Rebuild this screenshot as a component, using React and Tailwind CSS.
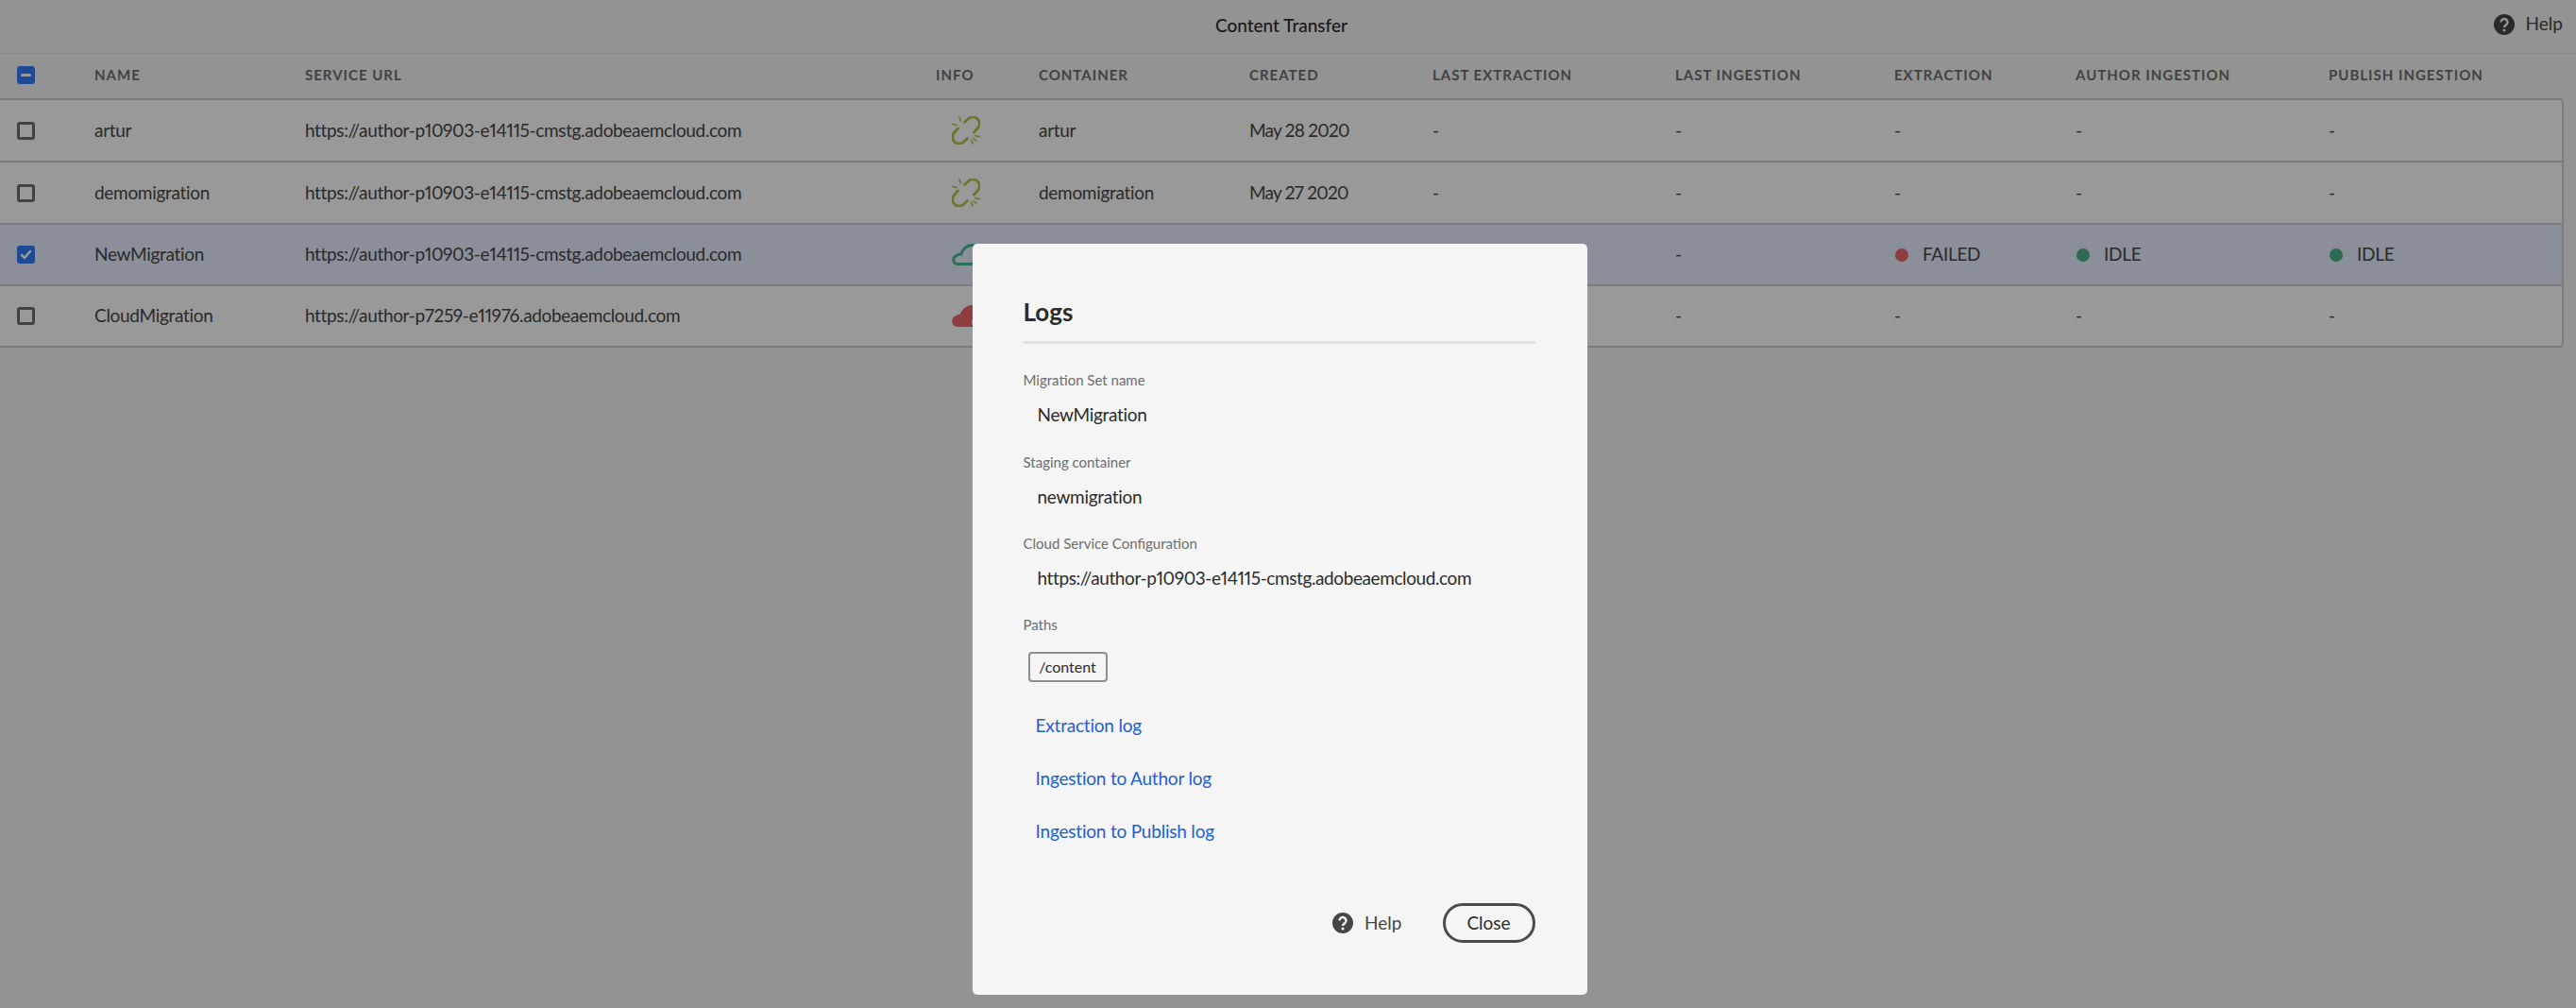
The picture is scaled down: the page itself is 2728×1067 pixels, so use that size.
const COLS = 'grid grid-cols-[100px_223px_668px_109px_223px_194px_257px_232px_192px_268px_1fr] items-center';

const URL_A = 'https://author-p10903-e14115-cmstg.adobeaemcloud.com';

const ROWS = [
  { name: 'artur', url: URL_A, info: 'link', container: 'artur', created: 'May 28 2020', h: 'h-[64px]' },
  { name: 'demomigration', url: URL_A, info: 'link', container: 'demomigration', created: 'May 27 2020', h: 'h-[66px]' },
  { name: 'NewMigration', url: URL_A, info: 'cloud', selected: true, h: 'h-[65px]' },
  { name: 'CloudMigration', url: 'https://author-p7259-e11976.adobeaemcloud.com', info: 'cloudFail', h: 'h-[65px]' },
];

function BrokenLink() {
  return (
    <svg width="30" height="30" viewBox="0 0 30 30" fill="none" stroke="#c2c04e" strokeWidth="2.800" strokeLinecap="round">
      <path d="M13.500 6.500 17 3.200A7 7 0 0 1 27.500 12.500L23.500 17" />
      <path d="M16.500 23.500 13 26.800A7 7 0 0 1 2.500 17.500L6.500 13" />
      <path d="M8 1l1.400 4M1 8.400l4 1M29 21.600l-4-1M22 29l-1.400-4M23 23.500l2.800 2.800" strokeWidth="1.600" />
    </svg>
  );
}

function Cloud({ failed }) {
  return (
    <svg width="40" height="24" viewBox="0 0 40 24" fill={failed ? '#ee6669' : 'none'} stroke={failed ? '#ee6669' : '#4bbb8f'} strokeWidth="3">
      <path d="M6 21.500a4.500 4.500 0 0 1-1-8.800C6 11.500 8 11 10 11c1-5 6-9.500 11-9.500 6 0 10 4 11 9.500 4 0 6.500 2.500 6.500 5.500S36 21.500 32 21.500Z" />
      {failed && <circle cx="25" cy="18" r="5" fill="#ffffff" stroke="#ee6669" strokeWidth="2" />}
    </svg>
  );
}

function HelpIcon() {
  return (
    <svg width="22" height="22" viewBox="0 0 22 22">
      <circle cx="11" cy="11" r="11" fill="#464646" />
      <path d="M7.500 8.500a3.500 3.500 0 1 1 5.600 2.800c-1.300 1-2.100 1.500-2.100 2.700" fill="none" stroke="#f5f5f5" strokeWidth="2.400" />
      <circle cx="11" cy="17" r="1.500" fill="#f5f5f5" />
    </svg>
  );
}

function Checkbox({ state }) {
  if (state === 'none') {
    return <span className="block w-[19px] h-[19px] rounded-[3px] border-[3px] border-[#6e6e6e] bg-transparent" />;
  }
  return (
    <span className="flex items-center justify-center w-[19px] h-[19px] rounded-[3px] bg-[#327cf8]">
      {state === 'checked' ? (
        <svg width="13" height="13" viewBox="0 0 13 13" fill="none" stroke="#ffffff" strokeWidth="2.500" strokeLinecap="round" strokeLinejoin="round">
          <path d="M2 7l3 3 6-7" />
        </svg>
      ) : (
        <span className="block w-[11px] h-[3px] rounded-sm bg-white" />
      )}
    </span>
  );
}

function Status({ color, label }) {
  return (
    <div className="flex items-center gap-[15px] pl-[1px]">
      <span className={`w-[14px] h-[14px] rounded-full ${color}`} />
      <span>{label}</span>
    </div>
  );
}

function Field({ label, value, className, valueClass = 'tracking-[-0.3px]' }) {
  return (
    <div className={className}>
      <div className="text-[15px] leading-[20px] text-[#6e6e6e]">{label}</div>
      <div className={`mt-[15px] pl-[15px] text-[19px] leading-[24px] text-[#2c2c2c] ${valueClass}`}>{value}</div>
    </div>
  );
}

export default function App() {
  return (
    <div className="relative h-screen w-full overflow-hidden bg-[#f5f5f5] text-[19px] text-[#464646] proportional-nums font-['Lato','Open_Sans',sans-serif]">

      {/* Top bar */}
      <div className="grid grid-cols-[1fr_auto_1fr] items-center h-[57px] pr-[14px] border-b border-[#e8e8e8]">
        <div />
        <div className="text-[19px] font-medium text-[#2c2c2c] pb-[2px]">Content Transfer</div>
        <div className="flex items-center justify-end gap-[12px] pb-[5px]">
          <HelpIcon />
          <span className="text-[19px]">Help</span>
        </div>
      </div>

      {/* Table header */}
      <div className={`${COLS} h-[47px] pr-[14px] pb-[2px]`}>
        <div className="pl-[18px]"><Checkbox state="indeterminate" /></div>
        {['NAME', 'SERVICE URL', 'INFO', 'CONTAINER', 'CREATED', 'LAST EXTRACTION', 'LAST INGESTION', 'EXTRACTION', 'AUTHOR INGESTION', 'PUBLISH INGESTION'].map(h => (
          <div key={h} className="text-[15px] font-bold tracking-[1px] text-[#6e6e6e] whitespace-nowrap">{h}</div>
        ))}
      </div>

      {/* Rows */}
      <div className="mr-[13px] bg-white border-t-2 border-b-2 border-r-2 border-[#cfcfcf] rounded-r-[4px] overflow-hidden tracking-[-0.3px]">
        {ROWS.map((r, i) => (
          <div key={r.name} className={`${COLS} ${r.h} ${i > 0 ? 'border-t-2 border-[#cfcfcf]' : ''} ${r.selected ? 'bg-[#e6eeff]' : ''}`}>
            <div className="pl-[18px]"><Checkbox state={r.selected ? 'checked' : 'none'} /></div>
            <div>{r.name}</div>
            <div className="tracking-[-0.35px]">{r.url}</div>
            <div className="pl-[17px] flex items-center">
              {r.info === 'link' ? <BrokenLink /> : <Cloud failed={r.info === 'cloudFail'} />}
            </div>
            <div>{r.container}</div>
            <div className="tracking-[-0.75px]">{r.created}</div>
            <div>{r.container ? '-' : ''}</div>
            <div>-</div>
            {r.selected ? <Status color="bg-[#ee6669]" label="FAILED" /> : <div>-</div>}
            {r.selected ? <Status color="bg-[#4bb28a]" label="IDLE" /> : <div>-</div>}
            {r.selected ? <Status color="bg-[#4bb28a]" label="IDLE" /> : <div>-</div>}
          </div>
        ))}
      </div>

      {/* Dialog */}
      <div className="fixed inset-0 bg-black/40 flex justify-center items-start pr-[18px] pt-[258px]">
        <div className="w-[651px] h-[795px] rounded-[5px] bg-[#f5f5f5] pl-[54px] pr-[55px] pt-[53px]">
          <div className="text-[26px] leading-[38px] font-bold text-[#2c2c2c]">Logs</div>
          <div className="mt-[12px] h-[3px] bg-[#e1e1e1]" />
          <Field className="mt-[28px]" label="Migration Set name" value="NewMigration" />
          <Field className="mt-[28px]" label="Staging container" value="newmigration" />
          <Field className="mt-[27px]" label="Cloud Service Configuration" value={URL_A} valueClass="tracking-[-0.4px]" />
          <div className="mt-[27px] text-[15px] leading-[20px] text-[#6e6e6e]">Paths</div>
          <div className="mt-[19px] ml-[5px] flex items-center justify-center w-[84px] h-[32px] rounded-[4px] border-2 border-[#8e8e8e] text-[16px] text-[#2c2c2c]">/content</div>
          <div className="mt-[34px] ml-[13px] flex flex-col gap-[32px] text-[19px] leading-[24px] tracking-[-0.2px] text-[#1e5fd8]">
            <a>Extraction log</a>
            <a>Ingestion to Author log</a>
            <a>Ingestion to Publish log</a>
          </div>
          <div className="mt-[64px] flex items-center justify-end">
            <HelpIcon />
            <span className="ml-[12px] text-[19px] text-[#464646]">Help</span>
            <button className="ml-[43px] w-[98px] h-[42px] rounded-full border-[3px] border-[#4b4b4b] text-[19px] text-[#2c2c2c]">Close</button>
          </div>
        </div>
      </div>
    </div>
  );
}
